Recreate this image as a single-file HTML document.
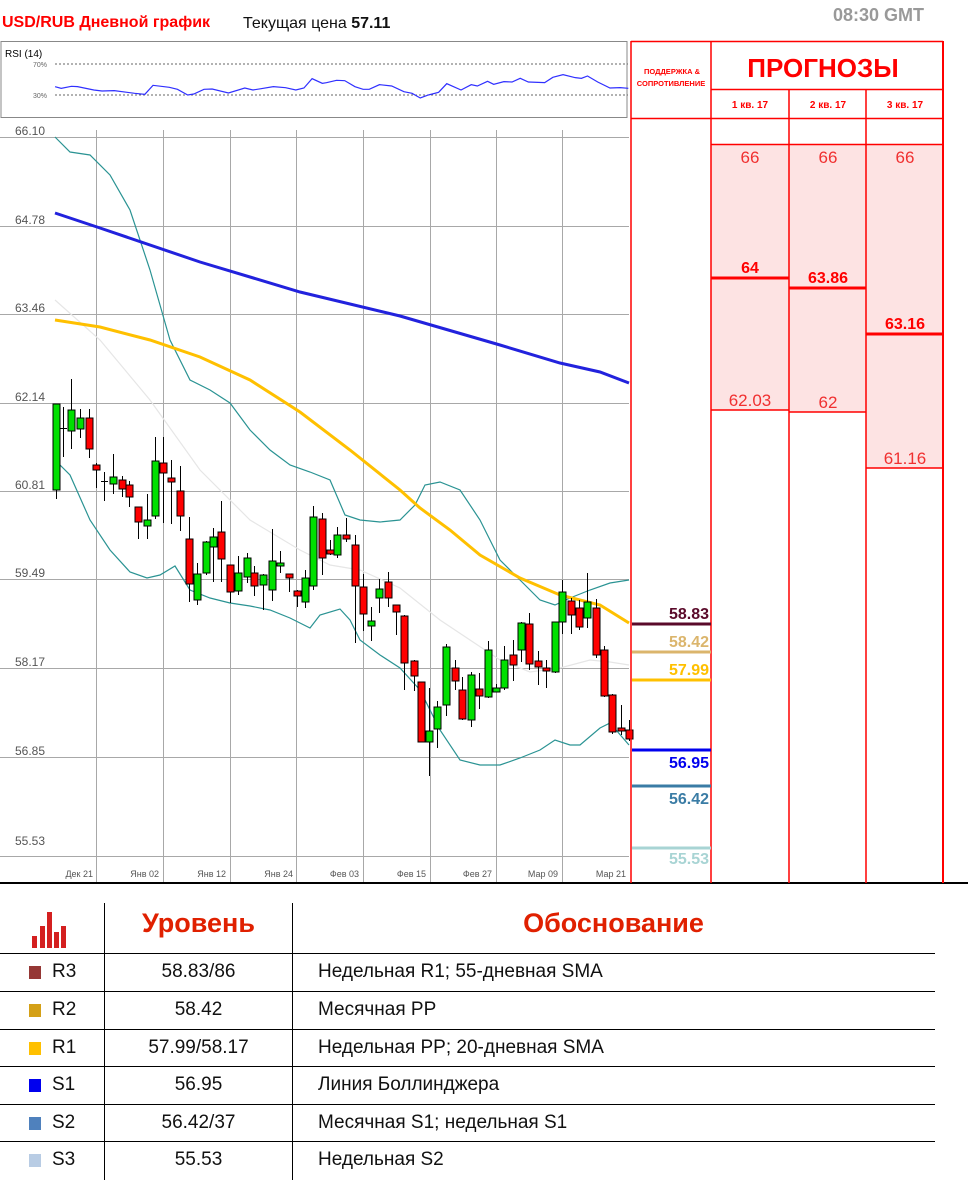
<!DOCTYPE html>
<html><head><meta charset="utf-8"><style>
body{margin:0;width:968px;height:1191px;background:#fff;overflow:hidden;font-family:"Liberation Sans",sans-serif;position:relative}
.a{position:absolute;white-space:nowrap}
.hr{position:absolute;left:0;width:935px;height:1px;background:#000}
.vr{position:absolute;top:903px;width:1px;height:277px;background:#000}
.row{position:absolute;left:0;width:935px;height:38px;font-size:19px;color:#111;line-height:38px}
.sq{position:absolute;left:29px;top:13px;width:12px;height:13px}
.lb{position:absolute;left:52px}
.lv{position:absolute;left:105px;width:187px;text-align:center}
.ld{position:absolute;left:318px}
</style></head><body>
<div class="a" style="left:2px;top:14px;font-size:16px;font-weight:bold;color:#f00">USD/RUB Дневной график</div>
<div class="a" style="left:243px;top:15px;font-size:16px;color:#111">Текущая цена <b>57.11</b></div>
<div class="a" style="left:833px;top:5px;font-size:18px;font-weight:bold;color:#999">08:30 GMT</div>

<svg class="a" style="left:0;top:0" width="968" height="890" viewBox="0 0 968 890">
<!-- RSI -->
<rect x="1" y="41.5" width="626" height="76" fill="none" stroke="#888"/>
<text x="5" y="57" font-size="10" fill="#000" font-family="Liberation Sans">RSI (14)</text>
<text x="33" y="67" font-size="7" fill="#666" font-family="Liberation Sans">70%</text>
<text x="33" y="98" font-size="7" fill="#666" font-family="Liberation Sans">30%</text>
<line x1="55" y1="64" x2="628" y2="64" stroke="#666" stroke-dasharray="2,2"/>
<line x1="55" y1="95" x2="628" y2="95" stroke="#666" stroke-dasharray="2,2"/>
<g transform="scale(0.408,0.3333)"><polyline fill="none" stroke="#3030ff" stroke-width="1.2" vector-effect="non-scaling-stroke" points="135,260 150,265 175,259 190,260 230,270 250,273 280,272 330,280 355,283 375,256 415,262 435,268 460,285 475,282 500,268 520,267 560,279 600,264 620,270 640,266 670,260 700,263 725,270 745,264 765,236 790,250 800,248 825,241 845,242 870,260 890,268 905,268 930,254 960,258 990,275 1010,280 1030,294 1050,285 1075,277 1095,251 1130,270 1155,254 1170,258 1195,244 1210,253 1235,245 1255,246 1275,235 1295,246 1335,248 1355,232 1380,224 1410,233 1425,235 1440,228 1465,246 1495,264 1520,263 1540,265"/></g>

<!-- grid -->
<g stroke="#a8a8a8" stroke-width="1">
<line x1="0" y1="137.5" x2="629" y2="137.5"/><line x1="0" y1="226.5" x2="629" y2="226.5"/><line x1="0" y1="314.5" x2="629" y2="314.5"/><line x1="0" y1="403.5" x2="629" y2="403.5"/><line x1="0" y1="491.5" x2="629" y2="491.5"/><line x1="0" y1="579.5" x2="629" y2="579.5"/><line x1="0" y1="668.5" x2="629" y2="668.5"/><line x1="0" y1="757.5" x2="629" y2="757.5"/><line x1="0" y1="856.5" x2="629" y2="856.5"/>
<line x1="96.5" y1="130" x2="96.5" y2="883"/><line x1="163.5" y1="130" x2="163.5" y2="883"/><line x1="230.5" y1="130" x2="230.5" y2="883"/><line x1="296.5" y1="130" x2="296.5" y2="883"/><line x1="363.5" y1="130" x2="363.5" y2="883"/><line x1="430.5" y1="130" x2="430.5" y2="883"/><line x1="496.5" y1="130" x2="496.5" y2="883"/><line x1="562.5" y1="130" x2="562.5" y2="883"/>
</g>
<g font-size="12" fill="#555" font-family="Liberation Sans">
<text x="15" y="135">66.10</text><text x="15" y="224">64.78</text><text x="15" y="312">63.46</text><text x="15" y="401">62.14</text><text x="15" y="489">60.81</text><text x="15" y="577">59.49</text><text x="15" y="666">58.17</text><text x="15" y="755">56.85</text><text x="15" y="845">55.53</text>
</g>
<g font-size="9" fill="#555" font-family="Liberation Sans" text-anchor="end">
<text x="93" y="877">Дек 21</text><text x="159" y="877">Янв 02</text><text x="226" y="877">Янв 12</text><text x="293" y="877">Янв 24</text><text x="359" y="877">Фев 03</text><text x="426" y="877">Фев 15</text><text x="492" y="877">Фев 27</text><text x="558" y="877">Мар 09</text><text x="626" y="877">Мар 21</text>
</g>
<line x1="0" y1="883" x2="968" y2="883" stroke="#000" stroke-width="2"/>

<!-- indicator lines -->
<polyline fill="none" stroke="#e6e6e6" stroke-width="1.2" points="55,300 100,340 150,400 200,470 250,520 300,550 330,565 360,570 400,588 440,620 470,640 500,660 530,672 560,668 590,660 610,662 629,665"/>
<polyline fill="none" stroke="#2a9393" stroke-width="1.2" points="55,137 70,152 90,155 110,175 130,210 150,270 170,340 190,380 210,390 230,403 250,430 270,450 290,465 310,472 330,480 345,515 360,520 380,522 400,520 415,505 425,485 440,482 460,490 480,520 500,560 520,580 540,600 555,605 570,598 590,590 610,583 629,580"/>
<polyline fill="none" stroke="#2a9393" stroke-width="1.2" points="55,460 70,475 90,520 110,550 130,572 147,578 160,575 175,566 190,590 210,598 230,603 250,606 270,610 290,618 310,628 320,615 340,609 350,620 360,640 380,655 400,668 420,690 440,730 460,760 480,765 500,765 520,758 540,750 555,740 570,745 580,745 600,728 610,723 629,745"/>
<polyline fill="none" stroke="#2222dd" stroke-width="3" points="55,213 100,228 200,262 300,292 400,316 500,345 560,363 600,372 629,383"/>
<polyline fill="none" stroke="#ffc000" stroke-width="3" points="55,320 100,327 150,340 200,357 250,380 300,412 350,450 400,490 420,508 450,530 480,555 520,578 560,595 600,605 629,623"/>

<!-- candles -->
<g stroke="#000" stroke-width="1" id="c"></g>

<!-- right panel -->
<rect x="711" y="144" width="232" height="739" fill="none"/>
<rect x="711" y="144" width="78" height="266" fill="#fde3e3"/>
<rect x="789" y="144" width="77" height="268" fill="#fde3e3"/>
<rect x="866" y="144" width="77" height="324" fill="#fde3e3"/>
<g stroke="#f00" stroke-width="1.5">
<line x1="631" y1="41" x2="631" y2="883"/><line x1="711" y1="41" x2="711" y2="883"/><line x1="789" y1="89" x2="789" y2="883"/><line x1="866" y1="89" x2="866" y2="883"/><line x1="943" y1="41" x2="943" y2="883" stroke-width="2"/>
<line x1="631" y1="41.5" x2="943" y2="41.5"/><line x1="711" y1="89.5" x2="943" y2="89.5"/><line x1="631" y1="118.5" x2="943" y2="118.5"/><line x1="711" y1="144.5" x2="943" y2="144.5"/>
<line x1="711" y1="410" x2="789" y2="410"/><line x1="789" y1="412" x2="866" y2="412"/><line x1="866" y1="468" x2="943" y2="468"/>
<line x1="711" y1="278" x2="789" y2="278" stroke-width="3"/><line x1="789" y1="288" x2="866" y2="288" stroke-width="3"/><line x1="866" y1="334" x2="943" y2="334" stroke-width="3"/>
</g>
<g fill="#f00" font-family="Liberation Sans" text-anchor="middle">
<text x="672" y="74" font-size="7.5" font-weight="bold">ПОДДЕРЖКА &amp;</text>
<text x="671" y="86" font-size="7.5" font-weight="bold">СОПРОТИВЛЕНИЕ</text>
<text x="823" y="77" font-size="26" font-weight="bold">ПРОГНОЗЫ</text>
<text x="750" y="108" font-size="10" font-weight="bold">1 кв. 17</text><text x="828" y="108" font-size="10" font-weight="bold">2 кв. 17</text><text x="905" y="108" font-size="10" font-weight="bold">3 кв. 17</text>
<g font-size="17" fill="#f03030"><text x="750" y="163">66</text><text x="828" y="163">66</text><text x="905" y="163">66</text>
<text x="750" y="406">62.03</text><text x="828" y="408">62</text><text x="905" y="464">61.16</text></g>
<g font-size="16" font-weight="bold"><text x="750" y="273">64</text><text x="828" y="283">63.86</text><text x="905" y="329">63.16</text></g>
</g>
<g stroke-width="3">
<line x1="632" y1="624" x2="711" y2="624" stroke="#5a0a2a"/>
<line x1="632" y1="652" x2="711" y2="652" stroke="#dbb56c"/>
<line x1="632" y1="680" x2="711" y2="680" stroke="#ffc000"/>
<line x1="632" y1="750" x2="711" y2="750" stroke="#0000ee"/>
<line x1="632" y1="786" x2="711" y2="786" stroke="#3a7ca5"/>
<line x1="632" y1="848" x2="711" y2="848" stroke="#a8d4d4"/>
</g>
<g font-family="Liberation Sans" font-size="16" font-weight="bold" text-anchor="end">
<text x="709" y="619" fill="#5a0a2a">58.83</text>
<text x="709" y="647" fill="#dbb56c">58.42</text>
<text x="709" y="675" fill="#ffc000">57.99</text>
<text x="709" y="768" fill="#0000ee">56.95</text>
<text x="709" y="804" fill="#3a7ca5">56.42</text>
<text x="709" y="864" fill="#a8d4d4">55.53</text>
</g>
</svg>

<!-- bottom table -->
<svg class="a" style="left:32px;top:910px" width="38" height="40"><g fill="#d42020">
<rect x="0" y="26" width="5" height="12"/><rect x="8" y="16" width="5" height="22"/><rect x="15" y="2" width="5" height="36"/><rect x="22" y="22" width="5" height="16"/><rect x="29" y="16" width="5" height="22"/></g></svg>
<div class="a" style="left:105px;width:187px;top:908px;text-align:center;font-size:27px;font-weight:bold;color:#e02000">Уровень</div>
<div class="a" style="left:292px;width:643px;top:908px;text-align:center;font-size:27px;font-weight:bold;color:#e02000">Обоснование</div>
<div class="vr" style="left:104px"></div><div class="vr" style="left:292px"></div>
<div class="hr" style="top:953px"></div><div class="hr" style="top:991px"></div><div class="hr" style="top:1029px"></div><div class="hr" style="top:1066px"></div><div class="hr" style="top:1104px"></div><div class="hr" style="top:1141px"></div>
<div class="row" style="top:953px"><div class="sq" style="background:#953735"></div><span class="lb">R3</span><span class="lv">58.83/86</span><span class="ld">Недельная R1; 55-дневная SMA</span></div>
<div class="row" style="top:991px"><div class="sq" style="background:#d4a017"></div><span class="lb">R2</span><span class="lv">58.42</span><span class="ld">Месячная PP</span></div>
<div class="row" style="top:1029px"><div class="sq" style="background:#ffc000"></div><span class="lb">R1</span><span class="lv">57.99/58.17</span><span class="ld">Недельная PP; 20-дневная SMA</span></div>
<div class="row" style="top:1066px"><div class="sq" style="background:#0000ee"></div><span class="lb">S1</span><span class="lv">56.95</span><span class="ld">Линия Боллинджера</span></div>
<div class="row" style="top:1104px"><div class="sq" style="background:#4f81bd"></div><span class="lb">S2</span><span class="lv">56.42/37</span><span class="ld">Месячная S1; недельная S1</span></div>
<div class="row" style="top:1141px"><div class="sq" style="background:#b8cce4"></div><span class="lb">S3</span><span class="lv">55.53</span><span class="ld">Недельная S2</span></div>

<script>
var d=[[56,404,490,404,499,1],[63,428,428,407,457,2],[71,410,431,379,449,1],[80,418,429,409,438,1],[89,418,449,409,458,0],[96,465,470,463,488,0],[104,481,481,472,501,2],[113,477,484,454,494,1],[122,480,489,476,497,0],[129,485,497,481,507,0],[138,507,522,507,539,0],[147,520,526,494,539,1],[155,461,516,437,519,1],[163,463,473,437,523,0],[171,478,482,460,524,0],[180,491,516,466,531,0],[189,539,584,517,602,0],[197,574,600,563,605,1],[206,542,573,541,575,1],[213,537,547,528,582,1],[221,532,559,501,582,0],[230,565,592,565,603,0],[238,573,591,556,595,1],[247,558,577,553,583,1],[254,573,586,566,596,0],[263,575,585,574,610,1],[272,561,590,529,601,1],[280,563,566,551,573,1],[289,574,578,574,592,0],[297,591,596,590,607,0],[305,578,602,570,608,1],[313,517,586,506,590,1],[322,519,558,513,575,0],[330,550,554,540,555,0],[337,535,555,527,558,1],[346,535,539,518,542,0],[355,545,586,535,643,0],[363,587,614,574,631,0],[371,621,626,607,641,1],[379,589,598,579,613,1],[388,582,598,572,607,0],[396,605,612,605,635,0],[404,616,663,615,690,0],[414,661,676,660,691,0],[421,682,742,682,742,0],[429,731,742,688,776,1],[437,707,729,701,748,1],[446,647,705,644,716,1],[455,668,681,660,690,0],[462,690,719,677,720,0],[471,675,720,672,727,1],[479,689,696,673,709,0],[488,650,697,641,698,1],[496,688,692,684,690,1],[504,660,688,646,690,1],[513,655,665,640,681,0],[521,623,650,622,662,1],[529,624,664,613,670,0],[538,661,667,651,685,0],[546,668,670,660,688,0],[555,622,672,622,673,1],[562,592,622,580,634,1],[571,601,615,598,634,0],[579,608,627,600,630,0],[587,602,618,573,628,1],[596,608,655,599,658,0],[604,650,696,646,697,0],[612,695,732,694,734,0],[621,728,730,705,735,0],[629,730,739,720,741,0]];
var s='';d.forEach(function(c){s+='<line x1="'+(c[0]+.5)+'" x2="'+(c[0]+.5)+'" y1="'+c[3]+'" y2="'+c[4]+'"/>';
if(c[5]==2)s+='<line x1="'+(c[0]-3)+'" x2="'+(c[0]+4)+'" y1="'+(c[1]+.5)+'" y2="'+(c[1]+.5)+'"/>';
else s+='<rect x="'+(c[0]-3)+'" y="'+c[1]+'" width="7" height="'+Math.max(3,c[2]-c[1])+'" fill="'+(c[5]?'#00e000':'#ff0000')+'"/>';});
document.getElementById('c').innerHTML=s;
</script>
</body></html>
